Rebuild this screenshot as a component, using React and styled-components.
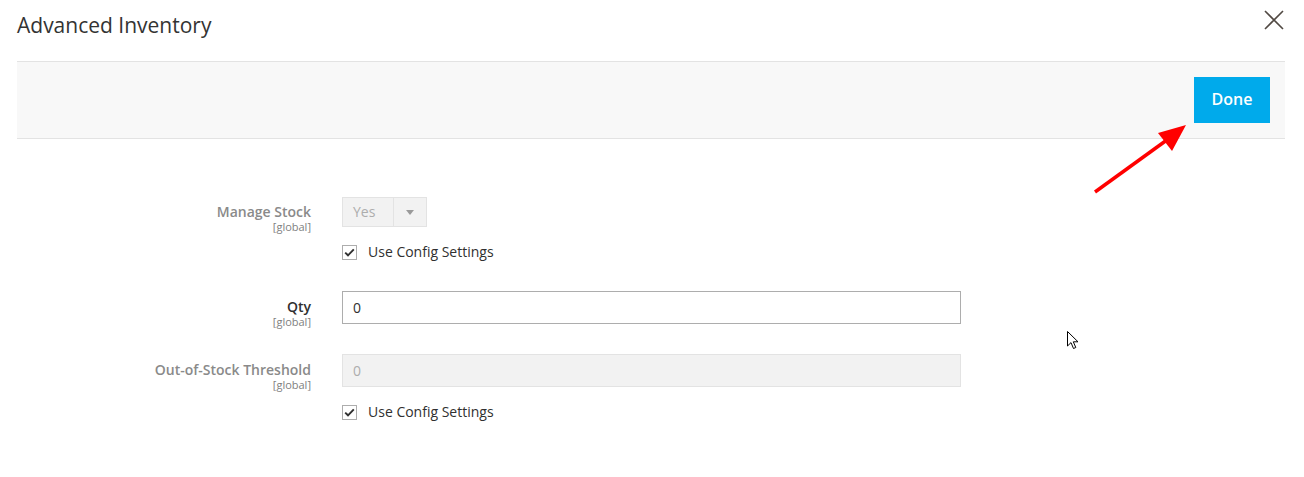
import React from 'react';
import styled, { createGlobalStyle } from 'styled-components';

const GlobalStyle = createGlobalStyle`
  html, body {
    margin: 0;
    padding: 0;
    background: #fff;
    font-family: "Open Sans", "DejaVu Sans", sans-serif;
    color: #303030;
  }
`;

const Modal = styled.div`
  position: relative;
  width: 1304px;
  height: 477px;
  overflow: hidden;
  background: #fff;
`;

const Header = styled.header`
  display: flex;
  align-items: flex-start;
  justify-content: space-between;
  height: 61px;
  padding: 0 19px 0 17px;
  box-sizing: border-box;
`;

const Title = styled.h1`
  margin: 9px 0 0;
  font-size: 21px;
  font-weight: 400;
  line-height: 32px;
  color: #333;
`;

const CloseButton = styled.button`
  margin-top: 9px;
  width: 22px;
  height: 22px;
  padding: 0;
  border: 0;
  background: none;
  cursor: pointer;
`;

const ActionBar = styled.div`
  display: flex;
  justify-content: flex-end;
  align-items: center;
  margin: 0 19px 0 17px;
  height: 78px;
  box-sizing: border-box;
  padding-right: 15px;
  background: #f8f8f8;
  border-top: 1px solid #e3e3e3;
  border-bottom: 1px solid #e3e3e3;
`;

const PrimaryButton = styled.button`
  width: 76px;
  height: 46px;
  padding: 0 0 2px;
  border: 0;
  background: #00aaeb;
  color: #fff;
  font-family: inherit;
  font-size: 16px;
  font-weight: 600;
  cursor: pointer;
`;

const Form = styled.div`
  display: grid;
  grid-template-columns: 294px 619px;
  column-gap: 31px;
  padding: 58px 0 0 17px;
`;

const Label = styled.div`
  text-align: right;
  padding-top: ${(p) => p.$top || 6}px;
`;

const LabelText = styled.div`
  font-size: 14px;
  font-weight: 600;
  line-height: 18px;
  color: ${(p) => (p.$disabled ? '#8a8a8a' : '#303030')};
`;

const Scope = styled.div`
  font-size: 11px;
  line-height: 12px;
  color: #808080;
`;

const Control = styled.div`
  display: flex;
  flex-direction: column;
  align-items: flex-start;
  margin-bottom: ${(p) => p.$gap || 0}px;
`;

const Select = styled.div`
  display: flex;
  width: 85px;
  height: 30px;
  box-sizing: border-box;
  border: 1px solid #e3e3e3;
  background: #f2f2f2;
`;

const SelectValue = styled.span`
  flex: 1;
  padding-left: 10px;
  font-size: 14px;
  line-height: 28px;
  color: #adadad;
`;

const SelectArrow = styled.span`
  width: 32px;
  display: flex;
  align-items: center;
  justify-content: center;
  border-left: 1px solid #e3e3e3;
  &::after {
    content: '';
    border-left: 4px solid transparent;
    border-right: 4px solid transparent;
    border-top: 5px solid #9a9a9a;
    margin-top: 1px;
  }
`;

const Input = styled.input`
  width: 619px;
  height: 33px;
  box-sizing: border-box;
  padding: 0 10px;
  border: 1px solid ${(p) => (p.disabled ? '#e3e3e3' : '#adadad')};
  background: ${(p) => (p.disabled ? '#f2f2f2' : '#fff')};
  color: ${(p) => (p.disabled ? '#adadad' : '#303030')};
  font-family: inherit;
  font-size: 14px;
  outline: none;
`;

const CheckRow = styled.label`
  display: flex;
  align-items: center;
  gap: 11px;
  margin-top: ${(p) => p.$top || 16}px;
  font-size: 14px;
  line-height: 18px;
  color: #303030;
`;

const Box = styled.span`
  width: 15px;
  height: 15px;
  box-sizing: border-box;
  border: 1px solid #adadad;
  background: #fff;
  display: flex;
  align-items: center;
  justify-content: center;
`;

const Overlay = styled.svg`
  position: absolute;
  pointer-events: none;
`;

function Checkbox({ top, children }) {
  return (
    <CheckRow $top={top}>
      <Box>
        <svg width="11" height="9" viewBox="0 0 11 9">
          <path d="M1.2 4.6 L4 7.3 L9.8 1.3" fill="none" stroke="#303030" strokeWidth="1.9" />
        </svg>
      </Box>
      {children}
    </CheckRow>
  );
}

export default function App() {
  return (
    <Modal>
      <GlobalStyle />
      <Header>
        <Title>Advanced Inventory</Title>
        <CloseButton aria-label="Close">
          <svg width="22" height="22" viewBox="0 0 22 22">
            <path d="M2 2 L20 20 M20 2 L2 20" stroke="#514943" strokeWidth="1.6" />
          </svg>
        </CloseButton>
      </Header>
      <ActionBar>
        <PrimaryButton>Done</PrimaryButton>
      </ActionBar>
      <Form>
        <Label $top={6}>
          <LabelText $disabled>Manage Stock</LabelText>
          <Scope>[global]</Scope>
        </Label>
        <Control $gap={30}>
          <Select>
            <SelectValue>Yes</SelectValue>
            <SelectArrow />
          </Select>
          <Checkbox top={16}>Use Config Settings</Checkbox>
        </Control>

        <Label $top={7}>
          <LabelText>Qty</LabelText>
          <Scope>[global]</Scope>
        </Label>
        <Control $gap={30}>
          <Input defaultValue="0" />
        </Control>

        <Label $top={7}>
          <LabelText $disabled>Out-of-Stock Threshold</LabelText>
          <Scope>[global]</Scope>
        </Label>
        <Control>
          <Input defaultValue="0" disabled />
          <Checkbox top={16}>Use Config Settings</Checkbox>
        </Control>
      </Form>

      <Overlay width="110" height="90" viewBox="0 0 110 90" style={{ left: 1085, top: 115 }}>
        <line x1="10" y1="77" x2="86" y2="22" stroke="#f00" strokeWidth="3.5" />
        <polygon points="101,10 73,18 87,36" fill="#f00" />
      </Overlay>
      <Overlay width="14" height="22" viewBox="0 0 14 22" style={{ left: 1067, top: 331 }}>
        <path d="M0.5 0.5 L0.5 15 L4 11.6 L6.5 17.5 L8.8 16.5 L6.3 10.8 L11 10.8 Z" fill="#fff" stroke="#000" strokeWidth="1" />
      </Overlay>
    </Modal>
  );
}
